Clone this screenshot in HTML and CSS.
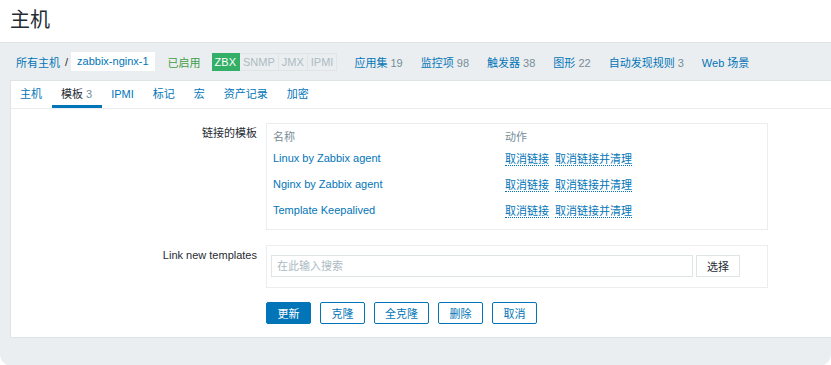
FILE: index.html
```html
<!DOCTYPE html>
<html lang="zh-CN">
<head>
    <meta charset="UTF-8">
    <title>主机</title>
    <link rel="stylesheet" href="styles.css">
</head>
<body>
    <header class="page-header">
        <h1>主机</h1>
    </header>

    <div class="page">
        <nav class="host-nav">
            <a href="#" class="nav-link">所有主机</a>
            <span class="sep">/</span>
            <span class="host-name">zabbix-nginx-1</span>
            <span class="status-on">已启用</span>
            <span class="badges">
                <span class="badge badge-on">ZBX</span><span class="badge">SNMP</span><span class="badge">JMX</span><span class="badge">IPMI</span>
            </span>
            <a href="#" class="nav-link item">应用集 <span class="count">19</span></a>
            <a href="#" class="nav-link item">监控项 <span class="count">98</span></a>
            <a href="#" class="nav-link item">触发器 <span class="count">38</span></a>
            <a href="#" class="nav-link item">图形 <span class="count">22</span></a>
            <a href="#" class="nav-link item">自动发现规则 <span class="count">3</span></a>
            <a href="#" class="nav-link item">Web 场景</a>
        </nav>

        <div class="panel">
            <ul class="tabs">
                <li><a href="#">主机</a></li>
                <li class="active"><a href="#">模板 <span class="count">3</span></a></li>
                <li><a href="#">IPMI</a></li>
                <li><a href="#">标记</a></li>
                <li><a href="#">宏</a></li>
                <li><a href="#">资产记录</a></li>
                <li><a href="#">加密</a></li>
            </ul>

            <form class="form">
                <div class="form-row">
                    <label class="form-label">链接的模板</label>
                    <div class="box">
                        <table class="templates">
                            <thead>
                                <tr>
                                    <th class="col-name">名称</th>
                                    <th>动作</th>
                                </tr>
                            </thead>
                            <tbody>
                                <tr>
                                    <td><a href="#">Linux by Zabbix agent</a></td>
                                    <td><a href="#" class="action">取消链接</a> <a href="#" class="action">取消链接并清理</a></td>
                                </tr>
                                <tr>
                                    <td><a href="#">Nginx by Zabbix agent</a></td>
                                    <td><a href="#" class="action">取消链接</a> <a href="#" class="action">取消链接并清理</a></td>
                                </tr>
                                <tr>
                                    <td><a href="#">Template Keepalived</a></td>
                                    <td><a href="#" class="action">取消链接</a> <a href="#" class="action">取消链接并清理</a></td>
                                </tr>
                            </tbody>
                        </table>
                    </div>
                </div>

                <div class="form-row">
                    <label class="form-label">Link new templates</label>
                    <div class="box box-search">
                        <input type="text" class="search" placeholder="在此输入搜索">
                        <button type="button" class="btn-select">选择</button>
                    </div>
                </div>

                <div class="form-actions">
                    <button type="button" class="btn btn-primary">更新</button>
                    <button type="button" class="btn">克隆</button>
                    <button type="button" class="btn">全克隆</button>
                    <button type="button" class="btn">删除</button>
                    <button type="button" class="btn">取消</button>
                </div>
            </form>
        </div>
    </div>
</body>
</html>
```

FILE: styles.css
```css
* {
    margin: 0;
    padding: 0;
    box-sizing: border-box;
}

body {
    font-family: 'Liberation Sans', Arial, 'Noto Sans CJK SC', sans-serif;
    font-size: 11px;
    color: #1f2c33;
    background: #fff;
}

a {
    color: #0275b8;
    text-decoration: none;
}

.count {
    color: #768d99;
}

/* Title */
.page-header {
    height: 42px;
    padding: 8px 0 0 10px;
}

.page-header h1 {
    font-size: 20px;
    font-weight: normal;
    line-height: 24px;
}

/* Gray page area */
.page {
    background: #ebeef0;
    border-top: 1px solid #dfe4e7;
    border-radius: 0 0 12px 12px;
    padding: 0 0 28px 10px;
}

.host-nav {
    height: 37px;
    display: flex;
    align-items: center;
    padding-left: 6px;
    white-space: nowrap;
}

.sep {
    margin: 0 3px 0 5px;
}

.host-name {
    background: #fff;
    color: #0275b8;
    padding: 0 6px;
    line-height: 19px;
    margin-right: 13px;
}

.status-on {
    color: #429e47;
    margin-right: 11px;
}

.badges {
    display: flex;
    margin-right: 17px;
}

.badge {
    font-size: 11px;
    line-height: 16px;
    padding: 0 3px;
    color: #acbbc2;
    background: #ebeef0;
    border: 1px solid #dfe4e7;
    border-left: none;
}

.badge-on {
    color: #fff;
    background: #34af67;
    border-color: #34af67;
}

.host-nav .item {
    margin-right: 18px;
}

/* Tab panel */
.panel {
    background: #fff;
    border: 1px solid #dfe4e7;
    border-right: none;
    padding-bottom: 13px;
}

.tabs {
    list-style: none;
    display: flex;
    height: 28px;
    margin-left: -0.5px;
    border-bottom: 1px solid #ebeef0;
}

.tabs li {
    padding: 0 9.5px;
    line-height: 26px;
    border-bottom: 3px solid transparent;
}

.tabs li.active {
    border-bottom-color: #0275b8;
}

.tabs li.active a {
    color: #1f2c33;
}

/* Form */
.form {
    padding-top: 14px;
}

.form-row {
    display: flex;
    margin-bottom: 15px;
}

.form-label {
    width: 255px;
    text-align: right;
    padding: 1px 9px 0 0;
    line-height: 18px;
}

.box {
    width: 502px;
    border: 1px solid #ebeef0;
}

.templates {
    border-collapse: collapse;
    margin: 2px 6px 6px;
}

.templates th {
    text-align: left;
    font-weight: normal;
    color: #768d99;
    height: 19px;
}

.templates .col-name {
    width: 232px;
}

.templates td {
    height: 26px;
}

.action {
    border-bottom: 1px dotted #0275b8;
    margin-right: 3px;
}

.box-search {
    display: flex;
    padding: 9px 0 10px 4px;
}

.search {
    width: 422px;
    height: 22px;
    border: 1px solid #dfe4e7;
    padding: 0 5px;
    font: inherit;
    color: #1f2c33;
}

.search::placeholder {
    color: #acbbc2;
}

.btn-select {
    margin-left: 3px;
    width: 44px;
    height: 22px;
    background: #fff;
    border: 1px solid #dfe4e7;
    font: inherit;
    color: #1f2c33;
}

.form-actions {
    display: flex;
    gap: 9px;
    padding-left: 255px;
    margin-top: -1px;
}

.btn {
    height: 22px;
    min-width: 45px;
    padding: 0 10px;
    background: #fff;
    border: 1px solid #0275b8;
    border-radius: 2px;
    color: #0275b8;
    font: inherit;
}

.btn-primary {
    background: #0275b8;
    color: #fff;
}
```
